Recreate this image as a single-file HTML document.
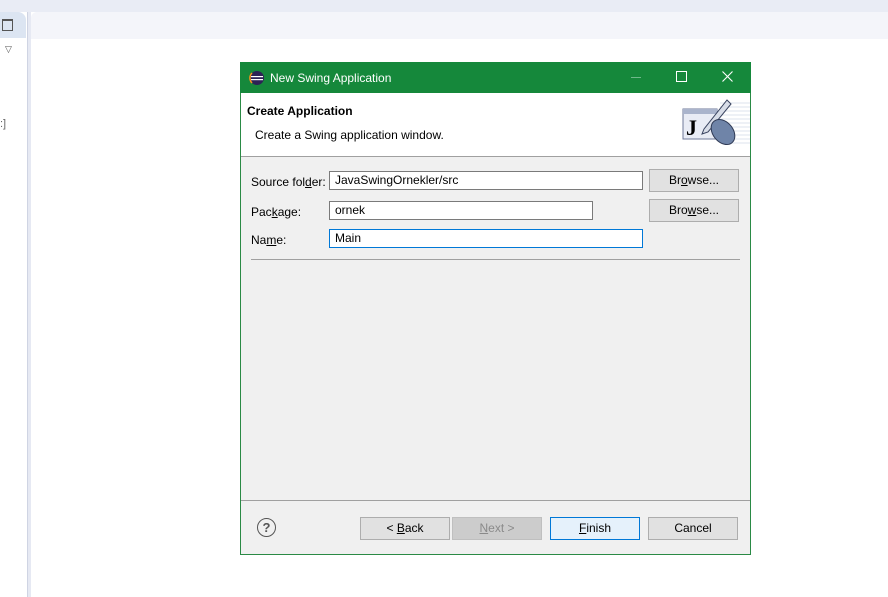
<html><head><style>
body{margin:0;width:888px;height:597px;position:relative;background:#fff;font-family:"Liberation Sans",sans-serif;font-size:12px;overflow:hidden}
.a{position:absolute}
.tf{position:absolute;background:#fff;border:1px solid #7a7a7a;height:19px;box-sizing:border-box;padding-left:5px;line-height:17px;font-size:12px}
.btn{position:absolute;background:#e1e1e1;border:1px solid #adadad;box-sizing:border-box;text-align:center;height:23px;line-height:21px;font-size:12px}
</style></head><body>
<div class="a" style="left:0;top:0;width:888px;height:12px;background:#e9ecf5"></div>
<div class="a" style="left:0;top:12px;width:27px;height:585px;background:#fff;border-right:1px solid #cfd4e3"></div>
<div class="a" style="left:0;top:12px;width:26px;height:26px;background:#dce5f2;border-top-right-radius:8px"></div>
<div class="a" style="left:2px;top:19px;width:9px;height:9px;border:1px solid #555;border-top-width:2px"></div>
<div class="a" style="left:5px;top:44px;font-size:9px;color:#555">▽</div>
<div class="a" style="left:0;top:118px;font-size:11px;color:#666">:]</div>
<div class="a" style="left:28px;top:12px;width:3px;height:585px;background:#e6e9f3"></div>
<div class="a" style="left:31px;top:12px;width:857px;height:27px;background:#f4f5fa;border-top-left-radius:6px"></div>

<div class="a" style="left:240px;top:62px;width:511px;height:493px;border:1px solid #2a8a45;box-sizing:border-box;background:#f0f0f0"></div>
<div class="a" style="left:240px;top:62px;width:511px;height:31px;background:#15883b"></div>
<svg class="a" style="left:249px;top:70px" width="16" height="16"><circle cx="8" cy="8" r="7" fill="#2c2255"/><rect x="2" y="6" width="12" height="1.2" fill="#fff"/><rect x="2" y="9" width="12" height="1.2" fill="#fff"/><path d="M3 3 A7 7 0 0 0 3 13" stroke="#f7941e" stroke-width="1.5" fill="none"/></svg>
<div class="a" style="left:270px;top:71px;color:#fff;font-size:12px">New Swing Application</div>
<div class="a" style="left:631px;top:77px;width:10px;height:1px;background:#6fb98a"></div>
<div class="a" style="left:676px;top:71px;width:9px;height:9px;border:1px solid #fff"></div>
<svg class="a" style="left:722px;top:71px" width="11" height="11"><path d="M0.5 0.5L10.5 10.5M10.5 0.5L0.5 10.5" stroke="#fff" stroke-width="1.1"/></svg>
<div class="a" style="left:241px;top:93px;width:509px;height:63px;background:#fff;border-bottom:1px solid #a0a0a0"></div>
<div class="a" style="left:247px;top:104px;font-weight:bold;font-size:12px">Create Application</div>
<div class="a" style="left:255px;top:128px;font-size:12px">Create a Swing application window.</div>
<svg class="a" style="left:680px;top:95px" width="70" height="55"><g stroke="#dde3ee" stroke-width="1"><line x1="40" y1="8" x2="70" y2="8"/><line x1="40" y1="12" x2="70" y2="12"/><line x1="40" y1="16" x2="70" y2="16"/><line x1="40" y1="20" x2="70" y2="20"/><line x1="40" y1="24" x2="70" y2="24"/><line x1="40" y1="28" x2="70" y2="28"/><line x1="40" y1="32" x2="70" y2="32"/><line x1="40" y1="36" x2="70" y2="36"/><line x1="40" y1="40" x2="70" y2="40"/><line x1="40" y1="44" x2="70" y2="44"/><line x1="40" y1="48" x2="70" y2="48"/></g><rect x="3" y="14" width="34" height="30" fill="#e9ecf5" stroke="#6f7a99"/><rect x="3" y="14" width="34" height="5" fill="#aab4cc"/><text x="6" y="40" font-family="Liberation Serif" font-weight="bold" font-size="22">J</text><path d="M24 34 L47 5 L51 9 L28 37 L22 39Z" fill="#d8dde8" stroke="#3a4460"/><ellipse cx="43" cy="37" rx="10" ry="14" transform="rotate(-40 43 37)" fill="#6f84a8" stroke="#2f3a55"/></svg>

<div class="a" style="left:251px;top:175px">Source fol<u>d</u>er:</div>
<div class="tf" style="left:329px;top:171px;width:314px">JavaSwingOrnekler/src</div>
<div class="btn" style="left:649px;top:169px;width:90px">Br<u>o</u>wse...</div>
<div class="a" style="left:251px;top:205px">Pac<u>k</u>age:</div>
<div class="tf" style="left:329px;top:201px;width:264px">ornek</div>
<div class="btn" style="left:649px;top:199px;width:90px">Bro<u>w</u>se...</div>
<div class="a" style="left:251px;top:233px">Na<u>m</u>e:</div>
<div class="tf" style="left:329px;top:229px;width:314px;border-color:#0078d7">Main</div>
<div class="a" style="left:251px;top:259px;width:489px;height:1px;background:#a0a0a0"></div>

<div class="a" style="left:241px;top:500px;width:509px;height:1px;background:#a0a0a0"></div>
<div class="a" style="left:257px;top:518px;width:17px;height:17px;border:1.5px solid #555;border-radius:50%;text-align:center;line-height:17px;font-weight:bold;color:#555;font-size:13px">?</div>
<div class="btn" style="left:360px;top:517px;width:90px">&lt; <u>B</u>ack</div>
<div class="btn" style="left:452px;top:517px;width:90px;background:#cccccc;border-color:#bfbfbf;color:#8a8a8a"><u>N</u>ext &gt;</div>
<div class="btn" style="left:550px;top:517px;width:90px;background:#e5f1fb;border-color:#0078d7"><u>F</u>inish</div>
<div class="btn" style="left:648px;top:517px;width:90px">Cancel</div>
</body></html>
